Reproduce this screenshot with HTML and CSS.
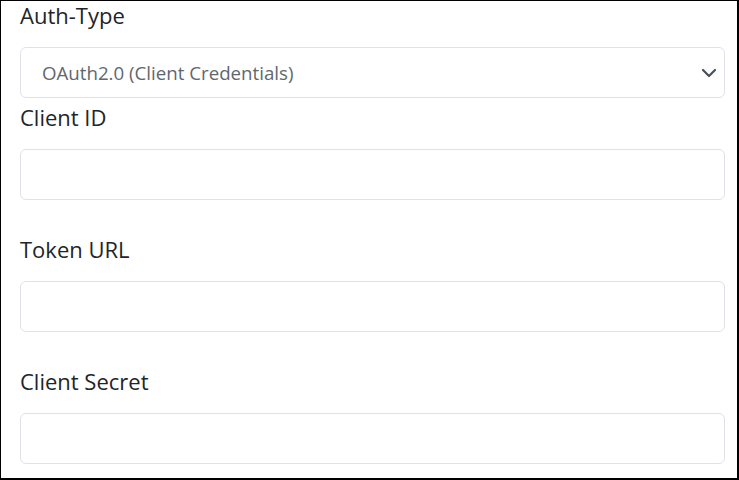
FILE: index.html
```html
<!DOCTYPE html>
<html lang="en">
<head>
<meta charset="utf-8">
<title>Auth</title>
<link rel="stylesheet" href="styles.css">
</head>
<body>
<div class="frame">
  <form class="form">
    <div class="field first">
      <label class="label">Auth-Type</label>
      <div class="select">
        <span class="select-text">OAuth2.0 (Client Credentials)</span>
        <svg class="chev" width="16" height="10" viewBox="0 0 16 10"><path d="M2 2l6 6 6-6" fill="none" stroke="#495057" stroke-width="2.2" stroke-linecap="round" stroke-linejoin="round"/></svg>
      </div>
    </div>
    <div class="field gap">
      <label class="label">Client ID</label>
      <div class="input"></div>
    </div>
    <div class="field gap">
      <label class="label">Token URL</label>
      <div class="input"></div>
    </div>
    <div class="field">
      <label class="label">Client Secret</label>
      <div class="input"></div>
    </div>
  </form>
</div>
</body>
</html>
```
FILE: styles.css
```css
html, body {
  margin: 0;
  padding: 0;
  background: #fff;
}
.frame {
  box-sizing: border-box;
  width: 739px;
  height: 480px;
  border-top: 1px solid #000;
  border-left: 1px solid #000;
  border-right: 2px solid #000;
  border-bottom: 2px solid #000;
  padding: 0 12px 0 19px;
  font-family: "Open Sans", "Noto Sans", sans-serif;
  color: #212529;
  overflow: hidden;
}
.form {
  display: flex;
  flex-direction: column;
}
.field {
  display: flex;
  flex-direction: column;
}
.first {
  margin-bottom: 5px;
}
.gap {
  margin-bottom: 35px;
}
.label {
  font-size: 22px;
  line-height: 30px;
  height: 30px;
  margin-top: -1px;
  margin-bottom: 17px;
}
.select, .input {
  box-sizing: border-box;
  height: 51px;
  border: 1px solid #dfe2e6;
  border-radius: 6px;
  background: #fff;
}
.select {
  display: flex;
  align-items: center;
  justify-content: space-between;
  padding: 0 7px 0 21px;
}
.select-text {
  font-size: 18.7px;
  color: #5f676f;
}
.chev {
  display: block;
}
```
